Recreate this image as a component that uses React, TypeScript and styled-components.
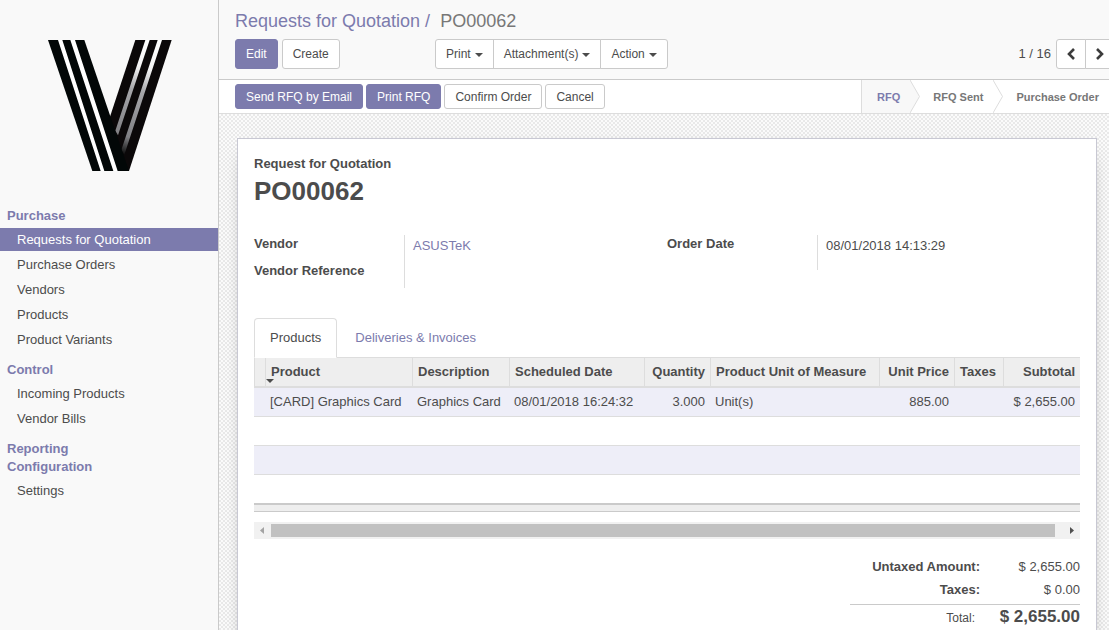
import React from "react";
import styled, { createGlobalStyle } from "styled-components";

const purple = "#7c7bad";
const ink = "#4c4c4c";
const line = "#cacaca";
const softLine = "#dddddd";

const GlobalStyle = createGlobalStyle`
  *, *::before, *::after { box-sizing: border-box; }
  body {
    margin: 0;
    font: 13px/18px "Liberation Sans", Arial, sans-serif;
    color: ${ink};
    background: #fff;
  }
  button, table { font: inherit; color: inherit; }
  a { color: ${purple}; text-decoration: none; }
`;

const Shell = styled.div`
  display: flex;
  height: 100vh;
  overflow: hidden;
`;

const Sidebar = styled.aside`
  flex: 0 0 219px;
  padding-top: 20px;
  background: #f9f9f9;
  border-right: 1px solid ${line};
`;

const Logo = styled.svg`
  display: block;
  width: 160px;
  height: 170px;
  margin: 0 0 17px 30px;
`;

const SectionTitle = styled.div`
  padding-left: 7px;
  font-weight: bold;
  color: ${purple};
`;

const MenuList = styled.ul`
  display: flex;
  flex-direction: column;
  gap: 2px;
  margin: 0;
  padding: 3px 0 10px;
  list-style: none;
`;

const MenuLink = styled.a<{ $active?: boolean }>`
  display: block;
  padding-left: 17px;
  line-height: 23px;
  color: ${(p) => (p.$active ? "#fff" : ink)};
  background: ${(p) => (p.$active ? purple : "transparent")};
`;

const Main = styled.main`
  flex: 1;
  min-width: 0;
  display: flex;
  flex-direction: column;
`;

const ControlPanel = styled.header`
  padding: 10px 0 10px 16px;
  background: #f9f9f9;
  border-bottom: 1px solid ${line};
`;

const Breadcrumb = styled.nav`
  display: flex;
  gap: 5px;
  margin-bottom: 7px;
  font-size: 18px;
  line-height: 22px;
  color: ${purple};

  span:last-child {
    margin-left: 5px;
    color: #777;
  }
`;

const Toolbar = styled.div`
  display: grid;
  grid-template-columns: 200px 1fr auto;
  align-items: center;
`;

const ButtonRow = styled.div<{ $gap: number }>`
  display: flex;
  gap: ${(p) => p.$gap}px;
`;

const Button = styled.button<{ $primary?: boolean; $compact?: boolean }>`
  height: ${(p) => (p.$compact ? 25 : 30)}px;
  padding: 0 10px;
  font-size: 12px;
  line-height: 18px;
  white-space: nowrap;
  color: ${(p) => (p.$primary ? "#fff" : ink)};
  background: ${(p) => (p.$primary ? purple : "#fff")};
  border: 1px solid ${(p) => (p.$primary ? purple : line)};
  border-radius: 3px;
`;

const ButtonGroup = styled.div`
  display: flex;

  ${Button} + ${Button} { margin-left: -1px; }
  ${Button}:not(:first-child) { border-top-left-radius: 0; border-bottom-left-radius: 0; }
  ${Button}:not(:last-child) { border-top-right-radius: 0; border-bottom-right-radius: 0; }
`;

const Caret = styled.span`
  display: inline-block;
  margin-left: 4px;
  vertical-align: middle;
  border: 4px solid transparent;
  border-top-color: currentColor;
  border-bottom: 0;
`;

const Pager = styled.div`
  display: flex;
  align-items: center;
  gap: 5px;
  margin-right: -6px;

  ${Button} { width: 30px; }
  svg { display: block; }
`;

const StatusBar = styled.div`
  display: flex;
  justify-content: space-between;
  align-items: center;
  height: 34px;
  padding-left: 16px;
  background: #fff;
  border-bottom: 1px solid ${softLine};
`;

const StatusSteps = styled.ol`
  display: flex;
  align-self: stretch;
  margin: 0;
  padding: 0;
  list-style: none;
  border-left: 1px solid ${softLine};
`;

const Step = styled.li<{ $current?: boolean }>`
  display: flex;

  button {
    padding: 0 10px 0 ${(p) => (p.$current ? 15 : 13)}px;
    border: 0;
    font-size: 11px;
    font-weight: bold;
    white-space: nowrap;
    color: ${(p) => (p.$current ? purple : "#777")};
    background: ${(p) => (p.$current ? "#f8f8f8" : "#fff")};
  }
  svg { display: block; }
`;

const Backdrop = styled.div`
  flex: 1;
  min-height: 0;
  overflow: hidden;
  padding: 24px 12px 0 18px;
  background: repeating-conic-gradient(#e9e9e9 0% 25%, #fbfbfb 0% 50%) 0 0 / 4px 4px;
`;

const Sheet = styled.section`
  padding: 16px;
  min-height: 100vh;
  background: #fff;
  border: 1px solid #c8c8d3;
  box-shadow: 0 5px 20px -15px #000;
`;

const Kicker = styled.div`
  font-weight: bold;
`;

const Title = styled.h1`
  margin: 3px 0 29px;
  font-size: 26px;
  line-height: 30px;
`;

const Groups = styled.div`
  display: grid;
  grid-template-columns: 1fr 1fr;
  align-items: start;
  margin-bottom: 30px;
`;

const Group = styled.dl`
  display: grid;
  grid-template-columns: 150px 1fr;
  margin: 0;

  dt { padding-bottom: 9px; font-weight: bold; }
  dt:last-of-type { padding-bottom: 8px; }
  dd {
    margin: 0;
    padding: 2px 0 6px 8px;
    border-left: 1px solid ${softLine};
  }
  dd:only-of-type { min-height: 35px; }
`;

const Tabs = styled.div`
  display: flex;
  gap: 2px;
  border-bottom: 1px solid ${softLine};
`;

const Tab = styled.button<{ $active?: boolean }>`
  margin-bottom: -1px;
  padding: 10px 15px;
  line-height: 18px;
  color: ${(p) => (p.$active ? ink : purple)};
  background: ${(p) => (p.$active ? "#fff" : "transparent")};
  border-width: 1px;
  border-style: solid;
  border-color: ${(p) => (p.$active ? `${softLine} ${softLine} #fff` : "transparent")};
  border-bottom-color: ${(p) => (p.$active ? "#fff" : softLine)};
  border-radius: ${(p) => (p.$active ? "4px 4px 0 0" : "0")};
`;

const Lines = styled.table`
  width: 100%;
  table-layout: fixed;
  border-collapse: separate;
  border-spacing: 0;

  th, td {
    padding: 0 5px;
    text-align: left;
    white-space: nowrap;
  }
  th {
    position: relative;
    height: 30px;
    background: #eee;
    border-left: 1px solid ${softLine};
    border-bottom: 2px solid ${softLine};
  }
  tbody td { height: 29px; border-bottom: 1px solid ${softLine}; }
  tbody tr:nth-child(odd) td { background: #eeeef8; }
  tbody tr:last-child td { height: 28px; border-bottom: 0; }
  tfoot td {
    height: 9px;
    padding: 0;
    background: #eee;
    border-top: 2px solid ${line};
    border-bottom: 1px solid ${line};
  }
  th.num, td.num { text-align: right; }
`;

const SortMark = styled(Caret)`
  position: absolute;
  left: 0;
  bottom: 3px;
  margin: 0;
`;

const ScrollTrack = styled.div`
  display: grid;
  grid-template-columns: 17px 1fr 25px;
  height: 17px;
  margin-top: 10px;
  background: #f1f1f1;
`;

const ScrollThumb = styled.div`
  margin: 2px 0;
  background: #c1c1c1;
`;

const ScrollArrow = styled.svg<{ $end?: boolean }>`
  width: 17px;
  height: 17px;
  justify-self: ${(p) => (p.$end ? "end" : "start")};
`;

const Totals = styled.dl`
  display: grid;
  grid-template-columns: 130px 100px;
  justify-content: end;
  margin: 16px 0 0;
  line-height: 23px;
  text-align: right;

  dt { font-weight: bold; }
  dd { margin: 0; }
  dt.total {
    margin-top: 3px;
    padding-right: 5px;
    font-size: 12px;
    font-weight: normal;
    line-height: 26px;
    border-top: 1px solid ${line};
  }
  dd.total {
    margin-top: 3px;
    font-size: 17px;
    font-weight: bold;
    border-top: 1px solid ${line};
  }
`;

const menu = [
  { title: "Purchase", items: ["Requests for Quotation", "Purchase Orders", "Vendors", "Products", "Product Variants"] },
  { title: "Control", items: ["Incoming Products", "Vendor Bills"] },
  { title: "Reporting", items: [] },
  { title: "Configuration", items: ["Settings"] },
];

const columns = [
  { label: "", width: 11, value: "" },
  { label: "Product", width: 147, value: "[CARD] Graphics Card", sorted: true },
  { label: "Description", width: 97, value: "Graphics Card" },
  { label: "Scheduled Date", width: 135, value: "08/01/2018 16:24:32" },
  { label: "Quantity", width: 66, value: "3.000", num: true },
  { label: "Product Unit of Measure", width: 169, value: "Unit(s)" },
  { label: "Unit Price", width: 75, value: "885.00", num: true },
  { label: "Taxes", width: 49, value: "" },
  { label: "Subtotal", width: 77, value: "$ 2,655.00", num: true },
];

function BrandLogo() {
  return (
    <Logo viewBox="0 0 480 510" role="img" aria-label="V logo">
      <defs>
        <linearGradient id="fold" gradientUnits="userSpaceOnUse" x1="370" y1="60" x2="275" y2="400">
          <stop offset="0" stopColor="#fff" />
          <stop offset="0.25" stopColor="#f4f4f4" />
          <stop offset="0.45" stopColor="#a6a6aa" />
          <stop offset="0.85" stopColor="#808084" />
          <stop offset="1" stopColor="#111" />
        </linearGradient>
      </defs>
      <path d="M316 60H425L297 453H240V290Z" fill="#0b0809" />
      <path d="M346 60H359L264 346L256 332ZM383 60H396L283 404L274 390Z" fill="url(#fold)" />
      <path d="M54 60H163L297 453H187Z" fill="#020707" />
      <path d="M84 60H97L223 453H212ZM121 60H135L263 453H250Z" fill="#fff" />
    </Logo>
  );
}

function Chevron({ points }: { points: string }) {
  return (
    <svg width="8" height="12" viewBox="0 0 8 12" aria-hidden="true">
      <polyline points={points} fill="none" stroke="#3c3c3c" strokeWidth="2.6" />
    </svg>
  );
}

function StepArrow({ fill }: { fill: string }) {
  return (
    <svg width="10" height="33" viewBox="0 0 10 33" aria-hidden="true">
      <path d="M0 0L9.500 16.500L0 33" fill={fill} stroke={softLine} />
    </svg>
  );
}

export default function App() {
  return (
    <>
      <GlobalStyle />
      <Shell>
        <Sidebar>
          <BrandLogo />
          <nav>
            {menu.map((section) => (
              <React.Fragment key={section.title}>
                <SectionTitle>{section.title}</SectionTitle>
                {section.items.length > 0 && (
                  <MenuList>
                    {section.items.map((item) => (
                      <li key={item}>
                        <MenuLink href="#" $active={item === "Requests for Quotation"}>{item}</MenuLink>
                      </li>
                    ))}
                  </MenuList>
                )}
              </React.Fragment>
            ))}
          </nav>
        </Sidebar>
        <Main>
          <ControlPanel>
            <Breadcrumb>
              <a href="#">Requests for Quotation</a>
              <span>/</span>
              <span>PO00062</span>
            </Breadcrumb>
            <Toolbar>
              <ButtonRow $gap={4}>
                <Button $primary>Edit</Button>
                <Button>Create</Button>
              </ButtonRow>
              <ButtonGroup>
                <Button>Print<Caret /></Button>
                <Button>Attachment(s)<Caret /></Button>
                <Button>Action<Caret /></Button>
              </ButtonGroup>
              <Pager>
                <span>1 / 16</span>
                <ButtonGroup>
                  <Button aria-label="Previous"><Chevron points="7,1 2,6 7,11" /></Button>
                  <Button aria-label="Next"><Chevron points="1,1 6,6 1,11" /></Button>
                </ButtonGroup>
              </Pager>
            </Toolbar>
          </ControlPanel>
          <StatusBar>
            <ButtonRow $gap={3}>
              <Button $primary $compact>Send RFQ by Email</Button>
              <Button $primary $compact>Print RFQ</Button>
              <Button $compact>Confirm Order</Button>
              <Button $compact>Cancel</Button>
            </ButtonRow>
            <StatusSteps>
              <Step $current><button>RFQ</button><StepArrow fill="#f8f8f8" /></Step>
              <Step><button>RFQ Sent</button><StepArrow fill="#fff" /></Step>
              <Step><button>Purchase Order</button></Step>
            </StatusSteps>
          </StatusBar>
          <Backdrop>
            <Sheet>
              <Kicker>Request for Quotation</Kicker>
              <Title>PO00062</Title>
              <Groups>
                <Group>
                  <dt>Vendor</dt>
                  <dd><a href="#">ASUSTeK</a></dd>
                  <dt>Vendor Reference</dt>
                  <dd />
                </Group>
                <Group>
                  <dt>Order Date</dt>
                  <dd>08/01/2018 14:13:29</dd>
                </Group>
              </Groups>
              <Tabs role="tablist">
                <Tab role="tab" aria-selected="true" $active>Products</Tab>
                <Tab role="tab" aria-selected="false">Deliveries &amp; Invoices</Tab>
              </Tabs>
              <Lines>
                <colgroup>
                  {columns.map((c) => <col key={c.label} width={c.width} />)}
                </colgroup>
                <thead>
                  <tr>
                    {columns.map((c) => (
                      <th key={c.label} className={c.num ? "num" : undefined}>
                        {c.label}
                        {c.sorted && <SortMark />}
                      </th>
                    ))}
                  </tr>
                </thead>
                <tbody>
                  <tr>
                    {columns.map((c) => (
                      <td key={c.label} className={c.num ? "num" : undefined}>{c.value}</td>
                    ))}
                  </tr>
                  <tr><td colSpan={9} /></tr>
                  <tr><td colSpan={9} /></tr>
                  <tr><td colSpan={9} /></tr>
                </tbody>
                <tfoot>
                  <tr><td colSpan={9} /></tr>
                </tfoot>
              </Lines>
              <ScrollTrack>
                <ScrollArrow viewBox="0 0 17 17"><path d="M10 5V12L6 8.500Z" fill="#a3a3a3" /></ScrollArrow>
                <ScrollThumb />
                <ScrollArrow $end viewBox="0 0 17 17"><path d="M7 5V12L11 8.500Z" fill="#505050" /></ScrollArrow>
              </ScrollTrack>
              <Totals>
                <dt>Untaxed Amount:</dt>
                <dd>$ 2,655.00</dd>
                <dt>Taxes:</dt>
                <dd>$ 0.00</dd>
                <dt className="total">Total:</dt>
                <dd className="total">$ 2,655.00</dd>
              </Totals>
            </Sheet>
          </Backdrop>
        </Main>
      </Shell>
    </>
  );
}
